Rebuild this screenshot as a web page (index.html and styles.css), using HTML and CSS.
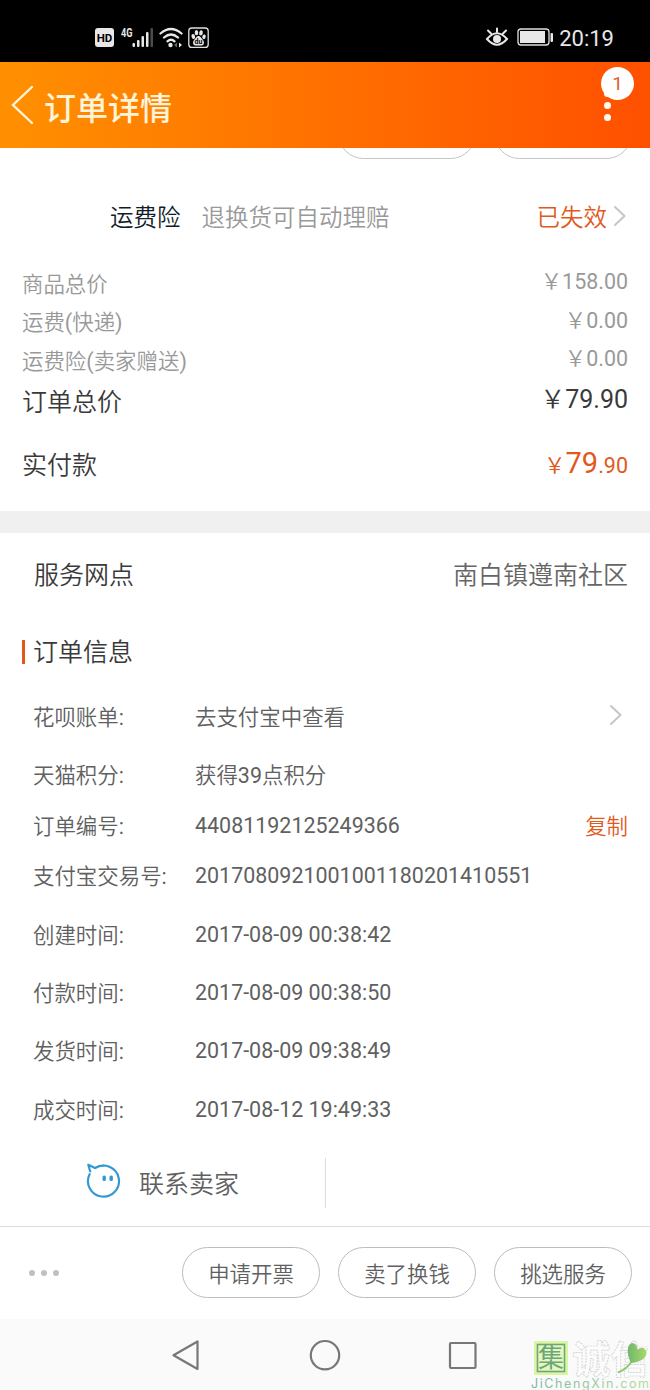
FILE: index.html
```html
<!DOCTYPE html>
<html lang="zh-CN">
<head>
<meta charset="utf-8">
<title>订单详情</title>
<link rel="stylesheet" href="styles.css">
</head>
<body>
<div class="status">
  <div class="status-left">
    <svg width="116" height="26" viewBox="0 0 116 26">
      <rect x="1" y="5" width="19" height="19" rx="3" fill="#e8e8e8"/>
      <text x="10.5" y="18.800" class="hd" text-anchor="middle">HD</text>
      <text x="27" y="13.500" class="g4" textLength="11.500" lengthAdjust="spacingAndGlyphs">4G</text>
      <g fill="#e8e8e8"><rect x="38.500" y="20" width="2.500" height="4" rx="1"/><rect x="43" y="17" width="2.500" height="7" rx="1"/><rect x="47.500" y="13" width="2.500" height="11" rx="1"/><rect x="52" y="9" width="2.500" height="15" rx="1"/><rect x="56.500" y="5" width="2.500" height="19" rx="1" fill="#4c4c4c"/></g>
      <g fill="none" stroke="#e8e8e8" stroke-width="2.300" stroke-linecap="round"><path d="M66.500 10.500Q77 1.500 87.500 10.500M70 14.500Q77 8.500 84 14.500M73.500 18.300Q77 15.300 80.500 18.300"/></g>
      <circle cx="76.500" cy="22" r="2.200" fill="#e8e8e8"/><path d="M83 19.500v5l-3-2.500z" fill="#666"/><path d="M85 19.500v5l3-2.500z" fill="#e8e8e8"/>
      <rect x="94.800" y="5" width="19.400" height="19.400" rx="3" fill="none" stroke="#e0e0e0" stroke-width="1.300"/>
      <g fill="#e8e8e8"><ellipse cx="99.300" cy="13.500" rx="1.800" ry="2.500" transform="rotate(-15 99.300 13.500)"/><ellipse cx="102.500" cy="9.700" rx="1.800" ry="2.600"/><ellipse cx="107" cy="9.800" rx="1.800" ry="2.600" transform="rotate(12 107 9.800)"/><ellipse cx="110" cy="13.800" rx="1.700" ry="2.400" transform="rotate(15 110 13.800)"/><path d="M104.500 13c2 0 2.500 2 4 3.500 2.500 2.500 1.500 6-1 6h-6c-2.500 0-3.500-3.500-1-6 1.500-1.500 2-3.500 4-3.500z"/></g>
      <text x="104.500" y="21" class="du" text-anchor="middle">du</text>
    </svg>
  </div>
  <div class="status-right">
    <svg width="68" height="26" viewBox="0 0 68 26">
      <g fill="none" stroke="#e8e8e8" stroke-width="2" stroke-linecap="round"><path d="M2 17Q12 5.500 22 17Q12 28.500 2 17z"/><path d="M12 10V6.500M6 11.500l-3-3M18 11.500l3-3"/></g>
      <circle cx="12" cy="17" r="4" fill="#e8e8e8"/>
      <rect x="33" y="7" width="31" height="16" rx="3" fill="none" stroke="#e0e0e0" stroke-width="1.300"/>
      <rect x="35" y="9" width="25" height="12" fill="#e8e8e8"/><rect x="65.500" y="11" width="2.500" height="9" rx="1" fill="#e8e8e8"/>
    </svg>
    <span class="clock">20:19</span>
  </div>
</div>
<header class="header">
  <svg class="back" width="24" height="40" viewBox="0 0 24 40"><path d="M21 2L2 20L21 38" fill="none" stroke="#fff4d8" stroke-width="2.400" stroke-linecap="round"/></svg>
  <h1 class="title">订单详情</h1>
  <div class="more"><i></i><i></i><i></i><span class="badge">1</span></div>
</header>
<main>
  <div class="clipped"><span class="clipped-pill"></span><span class="clipped-pill"></span></div>
  <div class="insurance">
    <span class="ins-name">运费险</span><span class="ins-desc">退换货可自动理赔</span><span class="ins-state">已失效</span>
    <svg width="14" height="22" viewBox="0 0 14 22"><path d="M2 2L11.500 11L2 20" class="chev"/></svg>
  </div>
  <section class="prices">
    <div class="price"><span>商品总价</span><b>&#65509;158.00</b></div>
    <div class="price"><span>运费(快递)</span><b>&#65509;0.00</b></div>
    <div class="price"><span>运费险(卖家赠送)</span><b>&#65509;0.00</b></div>
    <div class="price total"><span>订单总价</span><b>&#65509;79.90</b></div>
    <div class="price paid"><span>实付款</span><b>&#65509;<em>79</em>.90</b></div>
  </section>
  <div class="gap"></div>
  <div class="service"><span>服务网点</span><span class="place">南白镇遵南社区</span></div>
  <h2 class="section-title">订单信息</h2>
  <dl class="info">
    <div class="row"><dt>花呗账单:</dt><dd class="han">去支付宝中查看</dd><svg width="14" height="22" viewBox="0 0 14 22"><path d="M2 2L11.500 11L2 20" class="chev"/></svg></div>
    <div class="row"><dt>天猫积分:</dt><dd class="han">获得39点积分</dd></div>
    <div class="row tight"><dt>订单编号:</dt><dd>44081192125249366</dd><a class="copy">复制</a></div>
    <div class="row tight"><dt>支付宝交易号:</dt><dd>2017080921001001180201410551</dd></div>
    <div class="row"><dt>创建时间:</dt><dd>2017-08-09 00:38:42</dd></div>
    <div class="row"><dt>付款时间:</dt><dd>2017-08-09 00:38:50</dd></div>
    <div class="row"><dt>发货时间:</dt><dd>2017-08-09 09:38:49</dd></div>
    <div class="row"><dt>成交时间:</dt><dd>2017-08-12 19:49:33</dd></div>
  </dl>
  <div class="contact">
    <div class="contact-seller">
      <svg width="36" height="36" viewBox="0 0 36 36"><path d="M4.600 11.200A15.500 15.500 0 1 0 10.200 5Q14 2.600 19 2.700M5.200 8.500L3.300 1.800L10 5" fill="none" stroke="#3299d3" stroke-width="2.200" stroke-linecap="round" stroke-linejoin="round"/><rect x="17.500" y="12.500" width="3.400" height="5.600" rx="1.500" fill="#3299d3"/><rect x="24.500" y="12.500" width="3.400" height="5.600" rx="1.500" fill="#3299d3"/></svg>
      <span>联系卖家</span>
    </div>
  </div>
</main>
<footer class="actions">
  <div class="dots"><i></i><i></i><i></i></div>
  <button class="pill">申请开票</button><button class="pill">卖了换钱</button><button class="pill">挑选服务</button>
</footer>
<nav class="nav">
  <svg class="nav-icons" width="310" height="34" viewBox="0 0 310 34"><g fill="none" stroke="#777" stroke-width="2.200" stroke-linejoin="round"><path d="M27.500 3.500V31L3.500 17.200z"/><circle cx="155" cy="17.200" r="14.200"/><rect x="280" y="5" width="25.500" height="25" rx="1"/></g></svg>
  <svg class="mark" width="124" height="54" viewBox="0 0 124 54">
    <defs><linearGradient id="leaf" x1="0" x2="1"><stop offset="0" stop-color="#72b66c"/><stop offset="1" stop-color="#a6d96a"/></linearGradient><linearGradient id="word" x1="0" x2="1"><stop offset="0" stop-color="#7fb5a4"/><stop offset="1" stop-color="#b3dc9e"/></linearGradient></defs>
    <rect x="8" y="5" width="34" height="34" fill="#dcf5a4"/>
    <rect x="11.500" y="8.500" width="27" height="27" fill="#e5f7bd" stroke="#6ca77c" stroke-width="1.600"/>
    <text x="25" y="30.500" text-anchor="middle" class="mark-ji">集</text>
    <text x="46.500" y="36.500" class="mark-cx">诚信</text>
    <path d="M92 36.500Q101 33 106 25" fill="none" stroke="#8fca70" stroke-width="2"/>
    <path d="M105 27C101 19 100 9 106 7Q111 7 111.500 13.500Q118 9 120.500 16Q121 25 105 27z" fill="url(#leaf)"/>
    <text x="5" y="51.500" class="mark-url" textLength="118" fill="url(#word)">JiChengXin.com</text>
  </svg>
</nav>
</body>
</html>
```
FILE: styles.css
```css
* { box-sizing: border-box; }
body {
  margin: 0;
  width: 650px;
  height: 1390px;
  overflow: hidden;
  background: #fff;
  color: #606060;
  font-family: Roboto, "Noto Sans CJK SC DemiLight", "Noto Sans CJK SC", sans-serif;
  font-size: 21.45px;
}
h1, h2, dl, dd { margin: 0; font-weight: 400; }
b, em { font-weight: 400; font-style: normal; }
svg { display: block; flex: none; }

.status {
  height: 62px;
  padding: 0 36px 0 94px;
  display: flex;
  justify-content: space-between;
  align-items: flex-start;
  background: #000;
  color: #e8e8e8;
}
.status-left { padding-top: 23px; }
.status-right { display: flex; gap: 6px; padding-top: 22px; }
.clock { font-size: 22px; line-height: 33px; }
.hd { font: 700 11.5px Roboto, sans-serif; fill: #000; }
.g4 { font: 700 12px Roboto, sans-serif; fill: #e8e8e8; }
.du { font: 700 7px Roboto, sans-serif; fill: #000; }

.header {
  height: 86px;
  display: flex;
  align-items: center;
  padding: 0 39px 0 11px;
  background: linear-gradient(90deg, #ff9000, #ff5000);
}
.title { margin-left: 9px; font-family: "Noto Sans CJK SC", sans-serif; font-size: 32px; line-height: 40px; font-weight: 500; color: #fff4d8; flex: 1; padding-top: 1px; }
.more { position: relative; display: flex; flex-direction: column; align-items: center; gap: 5px; width: 8px; }
.more i { width: 7px; height: 7px; border-radius: 50%; background: #fffaf0; }
.badge {
  position: absolute;
  left: -2px;
  top: -23px;
  width: 33px;
  height: 33px;
  border-radius: 50%;
  background: #fff;
  color: #dc6030;
  font-size: 19px;
  line-height: 33px;
  text-align: center;
}

.clipped { height: 11px; padding-right: 18px; display: flex; justify-content: flex-end; align-items: flex-end; gap: 18px; overflow: hidden; }
.clipped-pill { flex: none; width: 138px; height: 51px; border: 1px solid #c4c4c4; border-radius: 26px; }

.insurance { height: 114px; padding: 0 23px 0 110px; display: flex; align-items: center; font-size: 23.5px; }
.ins-name { color: #101c28; }
.ins-desc { margin-left: 21px; flex: 1; color: #999; }
.ins-state { margin-right: 6px; color: #e2591b; }
.chev { fill: none; stroke: #c6c6c6; stroke-width: 2; stroke-linecap: round; }

.prices { height: 247px; margin-top: -9px; padding: 0 22px; color: #999; }
.price { height: 38.500px; display: flex; justify-content: space-between; align-items: center; }
.price span { padding-bottom: 2px; }
.price b { padding-bottom: 2px; line-height: 1.2; }
.total { height: 43px; font-size: 25px; color: #3a3a3a; }
.paid { height: 83px; font-size: 25px; color: #3a3a3a; }
.paid b { font-size: 21.5px; color: #e2591b; }
.paid em { font-size: 29px; }
.gap { height: 22px; background: #f0f0f0; }

.service { height: 79px; padding: 0 22px 0 34px; display: flex; justify-content: space-between; align-items: center; font-size: 25px; color: #3a3a3a; }
.place { color: #666; }
.section-title { margin: 28px 0 0 22px; height: 24px; border-left: 3px solid #e2591b; padding-left: 8px; line-height: 26px; font-size: 25px; color: #3a3a3a; }
.info { padding: 22px 27px 0 33px; }
.row { height: 58.400px; display: flex; align-items: center; }
.row dt { width: 162px; }
.row dd { flex: 1; padding-top: 2px; }
.row .han { padding-top: 0; }
.tight { height: 50.600px; margin-top: -3.900px; }
.tight + .tight { margin-top: 0; }
.tight:has(+ .row:not(.tight)) { margin-bottom: 3.900px; }
.copy { color: #e2591b; margin-right: -5px; }

.contact { height: 50px; margin-top: 20px; }
.contact-seller { width: 326px; height: 50px; padding-left: 85px; display: flex; align-items: center; gap: 18px; border-right: 1px solid #ddd; font-size: 25px; }
.contact-seller span { padding-bottom: 2px; }
.contact-seller svg { margin-top: -3px; }

.actions { margin-top: 18px; height: 93px; padding: 0 18px 0 29px; display: flex; align-items: center; gap: 18px; border-top: 1px solid #dcdcdc; }
.dots { flex: 1; display: flex; gap: 6px; }
.dots i { width: 6px; height: 6px; border-radius: 50%; background: #c0c0c0; }
.pill { width: 138px; height: 51px; padding: 0 0 1px; border: 1px solid #bcbcbc; border-radius: 26px; background: #fff; color: #606060; font: inherit; }

.nav { height: 71px; display: flex; background: #fafafa; }
.nav-icons { margin: 19px 0 0 170px; }
.mark { margin: 17px 0 0 46px; }
.mark-ji { font: 400 26px "Noto Sans CJK SC", sans-serif; fill: #6ca77c; }
.mark-cx { font: 700 38px "Noto Sans CJK SC", sans-serif; fill: #fcfcfc; stroke: #ccc; stroke-width: .7px; stroke-dasharray: 2 1; }
.mark-url { font: 12.5px Inter, sans-serif; }
```
